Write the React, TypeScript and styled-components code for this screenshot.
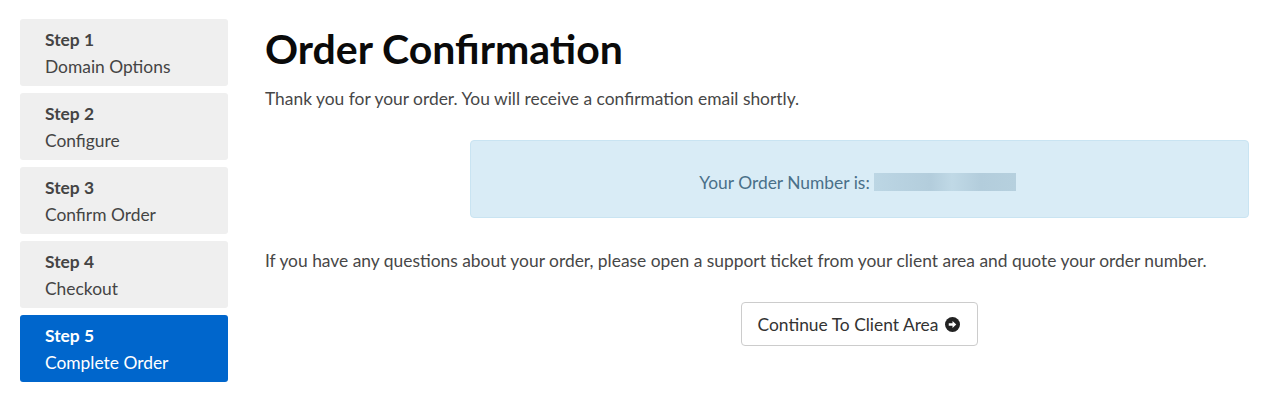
import * as React from "react";
import styled, { createGlobalStyle } from "styled-components";

const GlobalStyle = createGlobalStyle`
  html, body {
    margin: 0;
    padding: 0;
    background: #ffffff;
    font-family: Lato, "Open Sans", "Liberation Sans", sans-serif;
    color: #333333;
  }
`;

const Page = styled.div`
  display: flex;
  align-items: flex-start;
  gap: 37px;
  padding: 19px 20px 0 20px;
  width: 1280px;
  height: 415px;
  box-sizing: border-box;
`;

const Sidebar = styled.nav`
  display: flex;
  flex-direction: column;
  gap: 7px;
  width: 208px;
  flex-shrink: 0;
`;

const StepItem = styled.div<{ active?: boolean }>`
  height: 67px;
  box-sizing: border-box;
  padding: 7px 25px 0;
  border-radius: 3px;
  background: ${({ active }) => (active ? "#0066cc" : "#efefef")};
  color: ${({ active }) => (active ? "#ffffff" : "#444444")};
  font-size: 17.4px;
  line-height: 27px;
`;

const StepTitle = styled.div`
  font-weight: 700;
`;

const Main = styled.main`
  flex: 1;
  display: flex;
  flex-direction: column;
  padding-right: 11px;
`;

const Heading = styled.h1`
  margin: 6px 0 0 0;
  font-size: 41px;
  line-height: 48px;
  font-weight: 700;
  color: #0a0a0a;
`;

const Text = styled.p<{ top: number }>`
  margin: ${({ top }) => top}px 0 0 0;
  font-size: 17.4px;
  line-height: 24px;
  color: #474747;
  white-space: nowrap;
`;

const Centered = styled.div`
  margin-left: 205px;
  display: flex;
  flex-direction: column;
  align-items: center;
`;

const Alert = styled.div`
  margin-top: 29px;
  width: 100%;
  height: 78px;
  box-sizing: border-box;
  padding-top: 6px;
  padding-right: 4px;
  display: flex;
  align-items: center;
  justify-content: center;
  gap: 4px;
  background: #d9ecf6;
  border: 1px solid #c9e4f2;
  border-radius: 4px;
  color: #4a7089;
  font-size: 17.4px;
`;

const Blurred = styled.span`
  display: inline-block;
  width: 142px;
  height: 18px;
  background: linear-gradient(90deg, #bcd6e4 0%, #b3cddc 40%, #c0d9e6 55%, #b3cddc 75%, #b6d0de 100%);
  filter: blur(0.6px);
`;

const ContinueButton = styled.button`
  margin-top: 29px;
  display: inline-flex;
  align-items: center;
  gap: 7px;
  height: 44px;
  padding: 0 17px 0 16px;
  background: #ffffff;
  border: 1px solid #cccccc;
  border-radius: 4px;
  font-family: inherit;
  font-size: 17.4px;
  color: #333333;
  cursor: pointer;
`;

const ArrowCircle = () => (
  <svg width="15" height="15" viewBox="0 0 16 16" aria-hidden="true">
    <circle cx="8" cy="8" r="8" fill="#222222" />
    <path d="M4 6.6h4V4.2L12 8l-4 3.8V9.4H4z" fill="#ffffff" />
  </svg>
);

const steps = [
  { step: "Step 1", label: "Domain Options" },
  { step: "Step 2", label: "Configure" },
  { step: "Step 3", label: "Confirm Order" },
  { step: "Step 4", label: "Checkout" },
  { step: "Step 5", label: "Complete Order" },
];

export default function App() {
  return (
    <>
      <GlobalStyle />
      <Page>
        <Sidebar>
          {steps.map((s, i) => (
            <StepItem key={s.step} active={i === steps.length - 1}>
              <StepTitle>{s.step}</StepTitle>
              <div>{s.label}</div>
            </StepItem>
          ))}
        </Sidebar>
        <Main>
          <Heading>Order Confirmation</Heading>
          <Text top={14}>
            Thank you for your order. You will receive a confirmation email shortly.
          </Text>
          <Centered>
            <Alert>
              Your Order Number is: <Blurred />
            </Alert>
          </Centered>
          <Text top={31}>
            If you have any questions about your order, please open a support ticket from your client area and quote your order number.
          </Text>
          <Centered>
            <ContinueButton>
              Continue To Client Area <ArrowCircle />
            </ContinueButton>
          </Centered>
        </Main>
      </Page>
    </>
  );
}
